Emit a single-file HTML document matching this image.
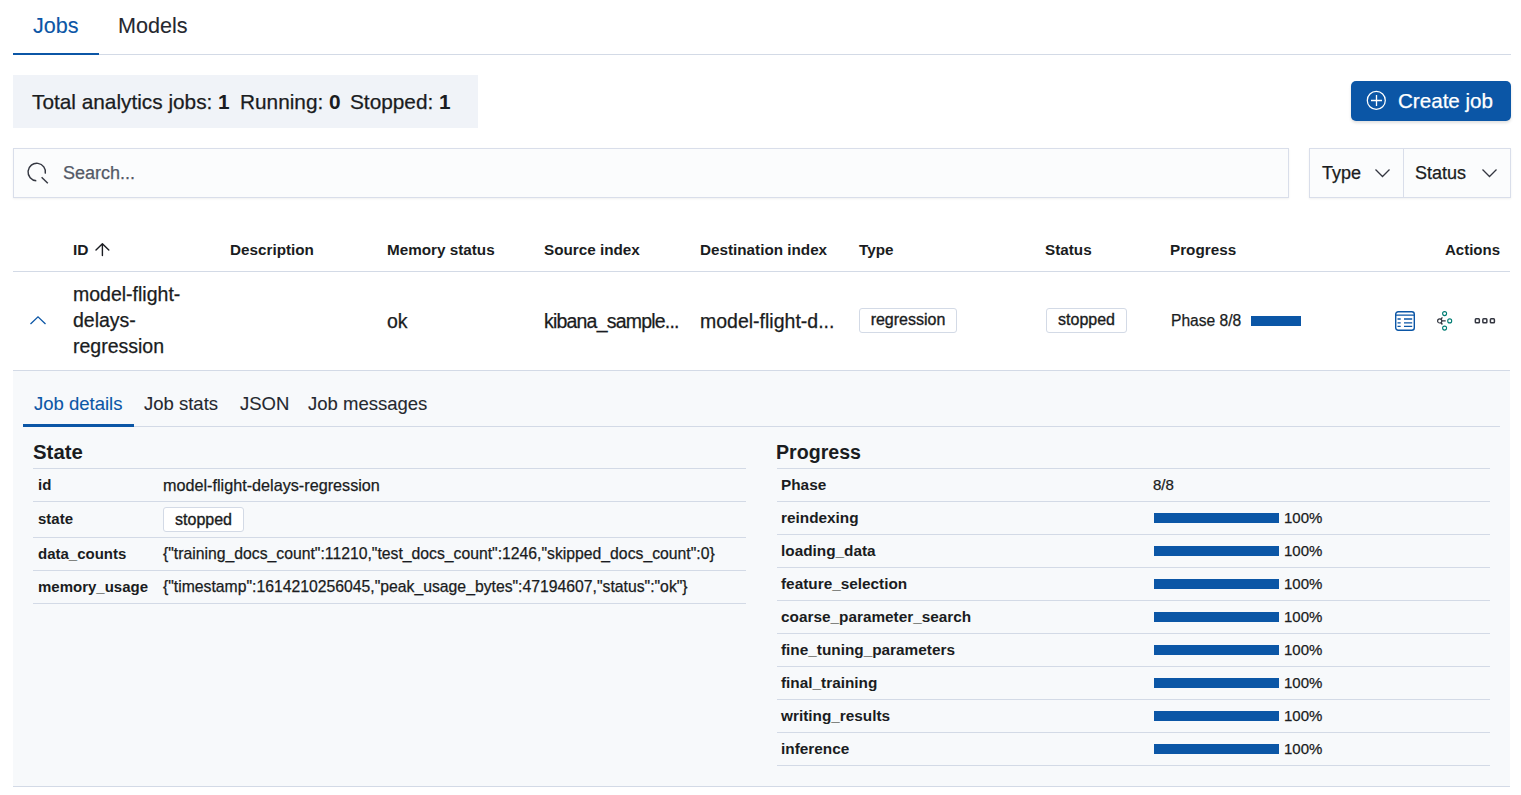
<!DOCTYPE html>
<html><head><meta charset="utf-8">
<style>
*{margin:0;padding:0;box-sizing:border-box}
html,body{width:1521px;height:795px;overflow:hidden;background:#fff}
body{font-family:"Liberation Sans",sans-serif;color:#343741;position:relative}
.a{position:absolute;white-space:nowrap;-webkit-text-stroke:0.25px currentColor}
.b,b{-webkit-text-stroke:0}
.b{font-weight:bold}
.blue{color:#0b56a6}
.hl{position:absolute;height:1px;background:#d3dae6}
.badge{position:absolute;-webkit-text-stroke:0.35px currentColor;border:1px solid #d3dae6;border-radius:3px;background:#fff;font-size:16px;color:#1a1c21;text-align:center}
.bar{position:absolute;height:10px;background:#0b56a6}
</style></head><body>

<!-- top tabs -->
<div class="a blue" style="left:33px;top:11px;font-size:21.6px;line-height:30px;-webkit-text-stroke:0.1px currentColor">Jobs</div>
<div class="a" style="left:118px;top:11px;font-size:21.6px;line-height:30px;color:#25282f;-webkit-text-stroke:0.1px currentColor">Models</div>
<div class="hl" style="left:13px;top:54px;width:1498px"></div>
<div class="a" style="left:13px;top:53px;width:86px;height:2px;background:#0b56a6"></div>

<!-- stats panel -->
<div class="a" style="left:13px;top:75px;width:465px;height:53px;background:#f0f3f8"></div>
<div class="a" style="left:32px;top:88px;font-size:20.8px;line-height:28px;color:#1a1c21">Total analytics jobs: <b>1</b></div>
<div class="a" style="left:240px;top:88px;font-size:20.8px;line-height:28px;color:#1a1c21">Running: <b>0</b></div>
<div class="a" style="left:350px;top:88px;font-size:20.8px;line-height:28px;color:#1a1c21">Stopped: <b>1</b></div>

<!-- create job -->
<div class="a" style="left:1351px;top:81px;width:160px;height:40px;background:#0b56a6;border-radius:5px;box-shadow:0 2px 3px rgba(0,0,0,.12)"></div>
<svg class="a" style="left:1366px;top:90px" width="21" height="21" viewBox="0 0 21 21"><circle cx="10.3" cy="10.4" r="9" fill="none" stroke="#fff" stroke-width="1.25"/><path d="M10.5 5v11M5 10.5h11" stroke="#fff" stroke-width="1.3"/></svg>
<div class="a" style="left:1398px;top:87px;font-size:20.6px;line-height:28px;color:#fff">Create job</div>

<!-- search -->
<div class="a" style="left:13px;top:148px;width:1276px;height:50px;background:#fbfcfd;border:1px solid #d9deea;box-shadow:0 1px 2px rgba(0,0,0,.06)"></div>
<svg class="a" style="left:20px;top:155px" width="34" height="34" viewBox="0 0 34 34"><path d="M25.3 18.6 A8.7 8.7 0 1 0 16.3 25.7" fill="none" stroke="#343741" stroke-width="1.45"/><path d="M21.6 22.2 L27.8 28.2" stroke="#343741" stroke-width="1.45"/></svg>
<div class="a" style="left:63px;top:160px;font-size:18px;line-height:26px;color:#535966">Search...</div>

<!-- filter group -->
<div class="a" style="left:1309px;top:148px;width:202px;height:50px;background:#fbfcfd;border:1px solid #d9deea;box-shadow:0 1px 2px rgba(0,0,0,.06)"></div>
<div class="a" style="left:1403px;top:149px;width:1px;height:48px;background:#d9deea"></div>
<div class="a" style="left:1322px;top:160px;font-size:18px;line-height:26px;color:#1a1c21">Type</div>
<svg class="a" style="left:1374px;top:168px" width="18" height="11" viewBox="0 0 18 11"><path d="M1.5 1.5 L8.5 8.5 L15.5 1.5" fill="none" stroke="#343741" stroke-width="1.3"/></svg>
<div class="a" style="left:1415px;top:160px;font-size:18px;line-height:26px;color:#1a1c21">Status</div>
<svg class="a" style="left:1481px;top:168px" width="18" height="11" viewBox="0 0 18 11"><path d="M1.5 1.5 L8.5 8.5 L15.5 1.5" fill="none" stroke="#343741" stroke-width="1.3"/></svg>

<!-- table header -->
<div class="a b" style="left:73px;top:240px;font-size:15.5px;line-height:20px;color:#1a1c21">ID</div>
<svg class="a" style="left:94px;top:241px" width="16" height="16" viewBox="0 0 16 16"><path d="M8.4 3v11.6M2 9.1l6.4-6.3 6.4 6.3" fill="none" stroke="#1a1c21" stroke-width="1.4" stroke-linecap="round" stroke-linejoin="round"/></svg>
<div class="a b" style="left:230px;top:240px;font-size:15.25px;line-height:20px;color:#1a1c21">Description</div>
<div class="a b" style="left:387px;top:240px;font-size:15.25px;line-height:20px;color:#1a1c21">Memory status</div>
<div class="a b" style="left:544px;top:240px;font-size:15.25px;line-height:20px;color:#1a1c21">Source index</div>
<div class="a b" style="left:700px;top:240px;font-size:15.25px;line-height:20px;color:#1a1c21">Destination index</div>
<div class="a b" style="left:859px;top:240px;font-size:15.25px;line-height:20px;color:#1a1c21">Type</div>
<div class="a b" style="left:1045px;top:240px;font-size:15.25px;line-height:20px;color:#1a1c21">Status</div>
<div class="a b" style="left:1170px;top:240px;font-size:15.25px;line-height:20px;color:#1a1c21">Progress</div>
<div class="a b" style="left:1400px;top:240px;width:100px;text-align:right;font-size:15px;line-height:20px;color:#1a1c21">Actions</div>
<div class="hl" style="left:13px;top:271px;width:1497px"></div>

<!-- row -->
<svg class="a" style="left:29px;top:313px" width="18" height="14" viewBox="0 0 18 14"><path d="M1.5 11 L9 3.8 L16.5 11" fill="none" stroke="#0b56a6" stroke-width="1.3"/></svg>
<div class="a" style="left:73px;top:282px;font-size:19.5px;line-height:25.8px;color:#1a1c21;white-space:normal;width:120px">model-flight-<br>delays-<br>regression</div>
<div class="a" style="left:387px;top:308px;font-size:19.5px;line-height:26px;color:#1a1c21">ok</div>
<div class="a" style="left:544px;top:308px;font-size:19.5px;line-height:26px;color:#1a1c21;letter-spacing:-0.8px">kibana_sample...</div>
<div class="a" style="left:700px;top:308px;font-size:19.5px;line-height:26px;color:#1a1c21;letter-spacing:0px">model-flight-d...</div>
<div class="badge" style="left:859px;top:308px;width:98px;height:25px;line-height:21px">regression</div>
<div class="badge" style="left:1046px;top:308px;width:81px;height:25px;line-height:21px">stopped</div>
<div class="a" style="left:1171px;top:310px;font-size:15.6px;line-height:22px;color:#1a1c21">Phase 8/8</div>
<div class="bar" style="left:1251px;top:316px;width:50px"></div>
<!-- action icons -->
<svg class="a" style="left:1394px;top:310px" width="22" height="22" viewBox="0 0 22 22"><rect x="1.7" y="1.7" width="18.6" height="18.6" rx="2.5" fill="none" stroke="#0b56a6" stroke-width="1.4"/><path d="M1.7 5.2h18.6M3.5 9h3.2M10 9h8.2M3.5 12.8h3.2M10 12.8h8.2M3.5 16.4h3.2M10 16.4h8.2" stroke="#0b56a6" stroke-width="1.3"/></svg>
<svg class="a" style="left:1434px;top:310px" width="22" height="22" viewBox="0 0 22 22"><path d="M5.7 10.9h6M5.7 10.9 L8.4 7.4M5.7 10.9 L8.4 14.5" stroke="#343741" stroke-width="1.3" fill="none"/><circle cx="5.7" cy="10.9" r="2.1" fill="#fff" stroke="#343741" stroke-width="1.2"/><circle cx="10.6" cy="3.6" r="2" fill="none" stroke="#017d73" stroke-width="1.1"/><circle cx="15.7" cy="10.9" r="2" fill="none" stroke="#017d73" stroke-width="1.1"/><circle cx="10.6" cy="18.1" r="2" fill="none" stroke="#017d73" stroke-width="1.1"/></svg>
<svg class="a" style="left:1474px;top:318px" width="22" height="6" viewBox="0 0 22 6"><rect x="1.35" y="0.85" width="4" height="4" rx="0.8" fill="none" stroke="#343741" stroke-width="1.5"/><rect x="8.85" y="0.85" width="4" height="4" rx="0.8" fill="none" stroke="#343741" stroke-width="1.5"/><rect x="16.4" y="0.85" width="4" height="4" rx="0.8" fill="none" stroke="#343741" stroke-width="1.5"/></svg>
<div class="hl" style="left:13px;top:370px;width:1497px"></div>

<!-- expanded area -->
<div class="a" style="left:13px;top:371px;width:1497px;height:415px;background:#f7f9fb"></div>
<div class="hl" style="left:13px;top:786px;width:1497px"></div>

<div class="a blue" style="left:34px;top:391px;font-size:18.5px;line-height:26px;-webkit-text-stroke:0.1px currentColor">Job details</div>
<div class="a" style="left:144px;top:391px;font-size:18.5px;line-height:26px;-webkit-text-stroke:0.1px currentColor;color:#25282f">Job stats</div>
<div class="a" style="left:240px;top:391px;font-size:18.5px;line-height:26px;-webkit-text-stroke:0.1px currentColor;color:#25282f">JSON</div>
<div class="a" style="left:308px;top:391px;font-size:18.5px;line-height:26px;-webkit-text-stroke:0.1px currentColor;color:#25282f">Job messages</div>
<div class="hl" style="left:23px;top:426px;width:1477px"></div>
<div class="a" style="left:23px;top:424px;width:111px;height:3px;background:#0b56a6"></div>

<!-- state -->
<div class="a b" style="left:33px;top:439px;font-size:20.4px;line-height:26px;color:#1a1c21">State</div>
<div class="hl" style="left:33px;top:468px;width:713px"></div>
<div class="hl" style="left:33px;top:501px;width:713px"></div>
<div class="hl" style="left:33px;top:537px;width:713px"></div>
<div class="hl" style="left:33px;top:570px;width:713px"></div>
<div class="hl" style="left:33px;top:603px;width:713px"></div>
<div class="a b" style="left:38px;top:475px;font-size:15px;line-height:20px;color:#1a1c21">id</div>
<div class="a" style="left:163px;top:475px;font-size:16.2px;line-height:20px;color:#1a1c21">model-flight-delays-regression</div>
<div class="a b" style="left:38px;top:509px;font-size:15px;line-height:20px;color:#1a1c21">state</div>
<div class="badge" style="left:163px;top:507px;width:81px;height:25px;line-height:23px">stopped</div>
<div class="a b" style="left:38px;top:544px;font-size:15px;line-height:20px;color:#1a1c21">data_counts</div>
<div class="a" style="left:163px;top:544px;font-size:15.75px;line-height:20px;color:#1a1c21">{"training_docs_count":11210,"test_docs_count":1246,"skipped_docs_count":0}</div>
<div class="a b" style="left:38px;top:577px;font-size:15px;line-height:20px;color:#1a1c21">memory_usage</div>
<div class="a" style="left:163px;top:577px;font-size:15.75px;line-height:20px;color:#1a1c21">{"timestamp":1614210256045,"peak_usage_bytes":47194607,"status":"ok"}</div>

<!-- progress -->
<div class="a b" style="left:776px;top:439px;font-size:19.6px;line-height:26px;color:#1a1c21">Progress</div>
<div class="hl" style="left:777px;top:468px;width:713px"></div>
<div class="a b" style="left:781px;top:475px;font-size:15.35px;line-height:20px;color:#1a1c21">Phase</div>
<div class="a" style="left:1153px;top:475px;font-size:15px;line-height:20px;color:#1a1c21">8/8</div>
<div class="hl" style="left:777px;top:501px;width:713px"></div>
<div class="a b" style="left:781px;top:508px;font-size:15.35px;line-height:20px;color:#1a1c21">reindexing</div>
<div class="bar" style="left:1154px;top:513px;width:125px"></div>
<div class="a" style="left:1284px;top:508px;font-size:15px;line-height:20px;color:#1a1c21">100%</div>
<div class="hl" style="left:777px;top:534px;width:713px"></div>
<div class="a b" style="left:781px;top:541px;font-size:15.35px;line-height:20px;color:#1a1c21">loading_data</div>
<div class="bar" style="left:1154px;top:546px;width:125px"></div>
<div class="a" style="left:1284px;top:541px;font-size:15px;line-height:20px;color:#1a1c21">100%</div>
<div class="hl" style="left:777px;top:567px;width:713px"></div>
<div class="a b" style="left:781px;top:574px;font-size:15.35px;line-height:20px;color:#1a1c21">feature_selection</div>
<div class="bar" style="left:1154px;top:579px;width:125px"></div>
<div class="a" style="left:1284px;top:574px;font-size:15px;line-height:20px;color:#1a1c21">100%</div>
<div class="hl" style="left:777px;top:600px;width:713px"></div>
<div class="a b" style="left:781px;top:607px;font-size:15.35px;line-height:20px;color:#1a1c21">coarse_parameter_search</div>
<div class="bar" style="left:1154px;top:612px;width:125px"></div>
<div class="a" style="left:1284px;top:607px;font-size:15px;line-height:20px;color:#1a1c21">100%</div>
<div class="hl" style="left:777px;top:633px;width:713px"></div>
<div class="a b" style="left:781px;top:640px;font-size:15.35px;line-height:20px;color:#1a1c21">fine_tuning_parameters</div>
<div class="bar" style="left:1154px;top:645px;width:125px"></div>
<div class="a" style="left:1284px;top:640px;font-size:15px;line-height:20px;color:#1a1c21">100%</div>
<div class="hl" style="left:777px;top:666px;width:713px"></div>
<div class="a b" style="left:781px;top:673px;font-size:15.35px;line-height:20px;color:#1a1c21">final_training</div>
<div class="bar" style="left:1154px;top:678px;width:125px"></div>
<div class="a" style="left:1284px;top:673px;font-size:15px;line-height:20px;color:#1a1c21">100%</div>
<div class="hl" style="left:777px;top:699px;width:713px"></div>
<div class="a b" style="left:781px;top:706px;font-size:15.35px;line-height:20px;color:#1a1c21">writing_results</div>
<div class="bar" style="left:1154px;top:711px;width:125px"></div>
<div class="a" style="left:1284px;top:706px;font-size:15px;line-height:20px;color:#1a1c21">100%</div>
<div class="hl" style="left:777px;top:732px;width:713px"></div>
<div class="a b" style="left:781px;top:739px;font-size:15.35px;line-height:20px;color:#1a1c21">inference</div>
<div class="bar" style="left:1154px;top:744px;width:125px"></div>
<div class="a" style="left:1284px;top:739px;font-size:15px;line-height:20px;color:#1a1c21">100%</div>
<div class="hl" style="left:777px;top:765px;width:713px"></div>
</body></html>
